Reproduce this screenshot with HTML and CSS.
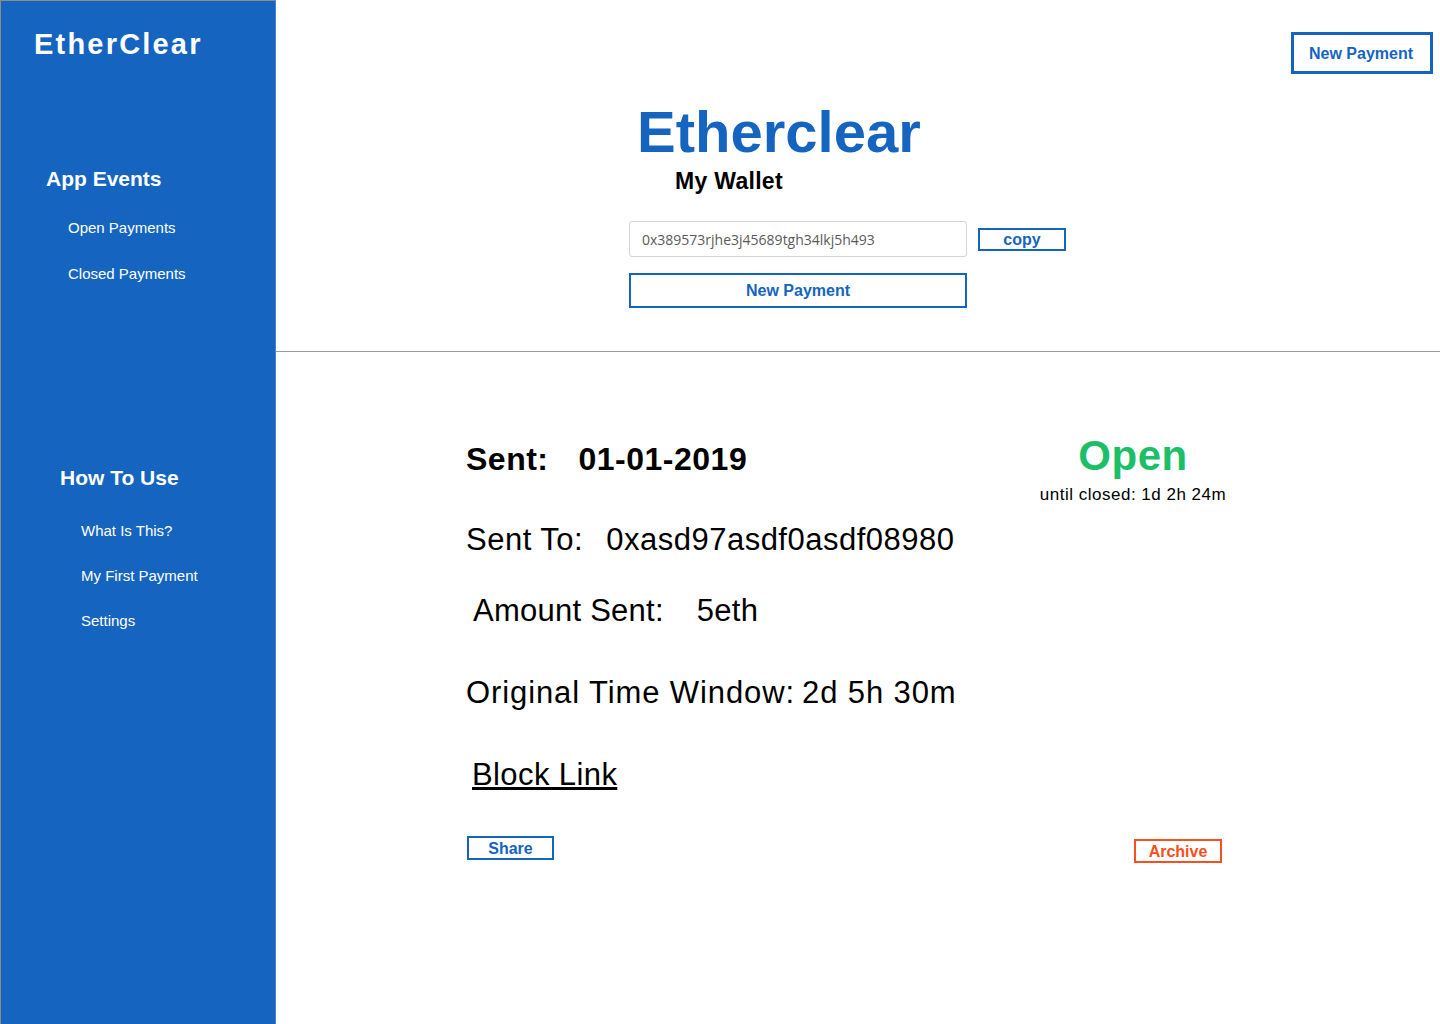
FILE: index.html
```html
<!DOCTYPE html>
<html lang="en">
<head>
<meta charset="utf-8">
<title>EtherClear</title>
<link rel="stylesheet" href="styles.css">
</head>
<body>
<div class="app">
  <aside class="sidebar">
    <div class="logo">EtherClear</div>
    <h2 class="nav-title nav-title--events">App Events</h2>
    <ul class="nav-list nav-list--events">
      <li>Open Payments</li>
      <li>Closed Payments</li>
    </ul>
    <h2 class="nav-title nav-title--howto">How To Use</h2>
    <ul class="nav-list nav-list--howto">
      <li>What Is This?</li>
      <li>My First Payment</li>
      <li>Settings</li>
    </ul>
  </aside>
  <main class="main">
    <header class="header">
      <div class="header-top">
        <button class="btn btn--top">New Payment</button>
      </div>
      <h1 class="brand">Etherclear</h1>
      <div class="wallet-label">My Wallet</div>
      <div class="address-row">
        <input class="address-input" type="text" value="0x389573rjhe3j45689tgh34lkj5h493" readonly>
        <button class="btn btn--copy">copy</button>
      </div>
      <button class="btn btn--new">New Payment</button>
    </header>
    <section class="details">
      <div class="sent-row">
        <div class="sent">Sent:<span class="val val--sent">01-01-2019</span></div>
        <div class="status">
          <div class="status-label">Open</div>
          <div class="status-sub">until closed: 1d 2h 24m</div>
        </div>
      </div>
      <div class="row row--to">Sent To:<span class="val val--to">0xasd97asdf0asdf08980</span></div>
      <div class="row row--amount">Amount Sent:<span class="val val--amount">5eth</span></div>
      <div class="row row--window">Original Time Window:<span class="val val--window">2d 5h 30m</span></div>
      <div class="row row--link"><a class="block-link" href="#">Block Link</a></div>
      <div class="actions">
        <button class="btn btn--share">Share</button>
        <button class="btn btn--archive">Archive</button>
      </div>
    </section>
  </main>
</div>
</body>
</html>
```

FILE: styles.css
```css
html, body {
  margin: 0;
  padding: 0;
  height: 1024px;
  overflow: hidden;
  background: #ffffff;
  font-family: "Liberation Sans", Arial, sans-serif;
  color: #000;
}

.app {
  display: flex;
  height: 1024px;
}

.sidebar {
  width: 276px;
  flex: 0 0 276px;
  box-sizing: border-box;
  background: #1565c0;
  border-left: 1px solid #8c8c8c;
  border-top: 1px solid #8c8c8c;
  border-right: 1px solid #4a86cf;
  color: #fff;
  padding-top: 25px;
}

.logo {
  margin-left: 33px;
  font-size: 29px;
  line-height: 36px;
  font-weight: bold;
  letter-spacing: 2.2px;
}

.nav-title {
  margin: 0;
  font-size: 21px;
  line-height: 26px;
  font-weight: bold;
}

.nav-title--events {
  margin: 104px 0 0 45px;
}

.nav-title--howto {
  margin: 181px 0 0 59px;
}

.nav-list {
  list-style: none;
  margin: 0;
  padding: 0;
  display: flex;
  flex-direction: column;
  gap: 26px;
  font-size: 15px;
  line-height: 20px;
}

.nav-list--events {
  margin: 26px 0 0 67px;
}

.nav-list--howto {
  margin: 30px 0 0 80px;
  gap: 25px;
}

.main {
  flex: 1;
  display: flex;
  flex-direction: column;
}

.header {
  height: 351px;
  border-bottom: 1px solid #9a9a9a;
  display: flex;
  flex-direction: column;
  align-items: flex-start;
}

.header-top {
  align-self: stretch;
  display: flex;
  justify-content: flex-end;
  padding: 32px 7px 0 0;
}

.btn {
  font-family: "Liberation Sans", Arial, sans-serif;
  font-weight: bold;
  font-size: 16px;
  line-height: 18px;
  background: #fff;
  color: #1565c0;
  border: 2px solid #1565c0;
  border-radius: 0;
  padding: 1px 0 0 0;
  box-sizing: border-box;
  cursor: pointer;
}

.btn--top {
  width: 142px;
  height: 42px;
  border-width: 3px;
  padding-right: 2px;
}

.brand {
  margin: 29px 0 0 361px;
  font-size: 58px;
  line-height: 58px;
  font-weight: bold;
  color: #1565c0;
}

.wallet-label {
  margin: 6px 0 0 399px;
  font-size: 23px;
  line-height: 28px;
  font-weight: bold;
  letter-spacing: 0.3px;
}

.address-row {
  margin: 26px 0 0 353px;
  display: flex;
  align-items: flex-start;
}

.address-input {
  width: 338px;
  height: 36px;
  box-sizing: border-box;
  border: 1px solid #d4d4d4;
  border-radius: 3px;
  padding: 0 0 0 12px;
  margin: 0;
  font-family: "Open Sans", "Liberation Sans", sans-serif;
  font-size: 14px;
  color: #5a5a5a;
  outline: none;
}

.btn--copy {
  width: 88px;
  height: 23px;
  margin: 7px 0 0 11px;
}

.btn--new {
  width: 338px;
  height: 35px;
  margin: 16px 0 0 353px;
}

.details {
  padding-top: 82px;
  display: flex;
  flex-direction: column;
}

.sent-row {
  display: flex;
  align-items: baseline;
}

.sent {
  padding-left: 190px;
  font-size: 32px;
  line-height: 40px;
  font-weight: bold;
  letter-spacing: 0.5px;
}

.val--sent {
  margin-left: 30px;
}

.status {
  margin-left: auto;
  margin-right: 207px;
  width: 200px;
  display: flex;
  flex-direction: column;
  align-items: center;
}

.status-label {
  font-size: 42px;
  line-height: 44px;
  font-weight: bold;
  color: #1cbf68;
  letter-spacing: 0.5px;
}

.status-sub {
  margin-top: 7px;
  font-size: 17px;
  line-height: 20px;
  letter-spacing: 0.5px;
}

.row {
  font-size: 31px;
  line-height: 40px;
}

.row--to {
  margin-top: 15px;
  padding-left: 190px;
  letter-spacing: 0.5px;
}

.val--to {
  margin-left: 23px;
}

.row--amount {
  margin-top: 31px;
  padding-left: 197px;
  letter-spacing: 0.25px;
}

.val--amount {
  margin-left: 33px;
}

.row--window {
  margin-top: 42px;
  padding-left: 190px;
  letter-spacing: 0.9px;
}

.val--window {
  margin-left: 7px;
}

.row--link {
  margin-top: 42px;
  padding-left: 196px;
  letter-spacing: 0.4px;
}

.block-link {
  color: #000;
  text-decoration: underline;
}

.actions {
  margin-top: 41px;
  display: flex;
  justify-content: space-between;
  align-items: flex-start;
  padding: 0 218px 0 191px;
}

.btn--share {
  width: 87px;
  height: 24px;
}

.btn--archive {
  width: 88px;
  height: 24px;
  margin-top: 3px;
  color: #f4511e;
  border-color: #f4511e;
}
```
